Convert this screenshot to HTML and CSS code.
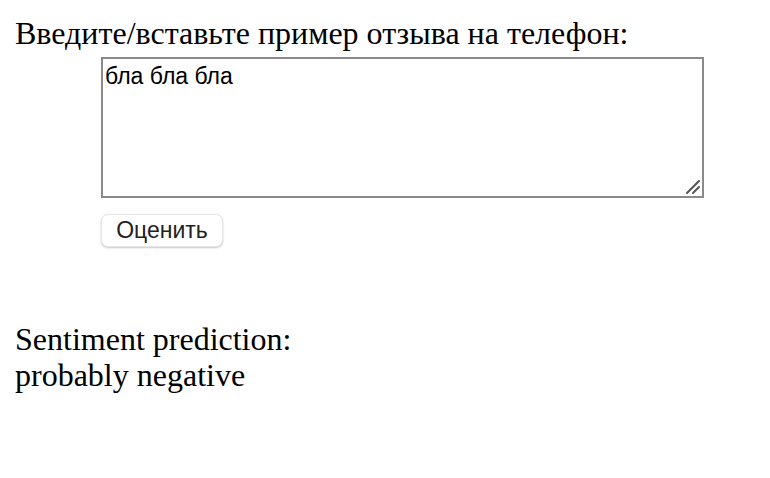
FILE: index.html
```html
<!DOCTYPE html>
<html>
<head>
<meta charset="utf-8">
<link rel="stylesheet" href="styles.css">
</head>
<body>
<form class="form">
  <label class="prompt" for="review">Введите/вставьте пример отзыва на телефон:</label>
  <div class="fields">
    <div class="area-wrap">
      <textarea id="review" class="review">бла бла бла</textarea>
      <svg class="grip" width="16" height="16" viewBox="0 0 16 16" aria-hidden="true">
        <path d="M2 14 L14 2 M8 14 L14 8" stroke="#555" stroke-width="2" stroke-linecap="round" fill="none"/>
      </svg>
    </div>
    <button type="button" class="submit">Оценить</button>
  </div>
</form>
<div class="result">
  <div>Sentiment prediction:</div>
  <div>probably negative</div>
</div>
</body>
</html>
```

FILE: styles.css
```css
html, body {
  margin: 0;
  background: #fff;
}
body {
  padding: 15px 0 0 15px;
  font-family: "Liberation Serif", "Times New Roman", serif;
  font-size: 32px;
  line-height: 36px;
  color: #000;
}
.form {
  margin: 0;
}
.prompt {
  display: block;
}
.fields {
  display: flex;
  flex-direction: column;
  align-items: flex-start;
  padding-left: 86px;
  margin-top: 6px;
}
.area-wrap {
  position: relative;
  display: flex;
}
.review {
  box-sizing: border-box;
  width: 603px;
  height: 141px;
  margin: 0;
  border: 2px solid #8a8a8a;
  border-radius: 0;
  padding: 4px 2px;
  font-family: "Liberation Sans", Arial, sans-serif;
  font-size: 23px;
  line-height: 26px;
  color: #000;
  resize: none;
  outline: none;
}
.grip {
  position: absolute;
  right: 3px;
  bottom: 3px;
}
.submit {
  margin-top: 16px;
  box-sizing: border-box;
  width: 122px;
  height: 33px;
  background: #fff;
  border: 1px solid #e6e6e6;
  border-radius: 7px;
  box-shadow: 0 1px 2px rgba(0,0,0,0.22);
  font-family: "Liberation Sans", Arial, sans-serif;
  font-size: 23px;
  line-height: 31px;
  color: #222;
  padding: 0;
}
.result {
  margin-top: 74px;
}
```
